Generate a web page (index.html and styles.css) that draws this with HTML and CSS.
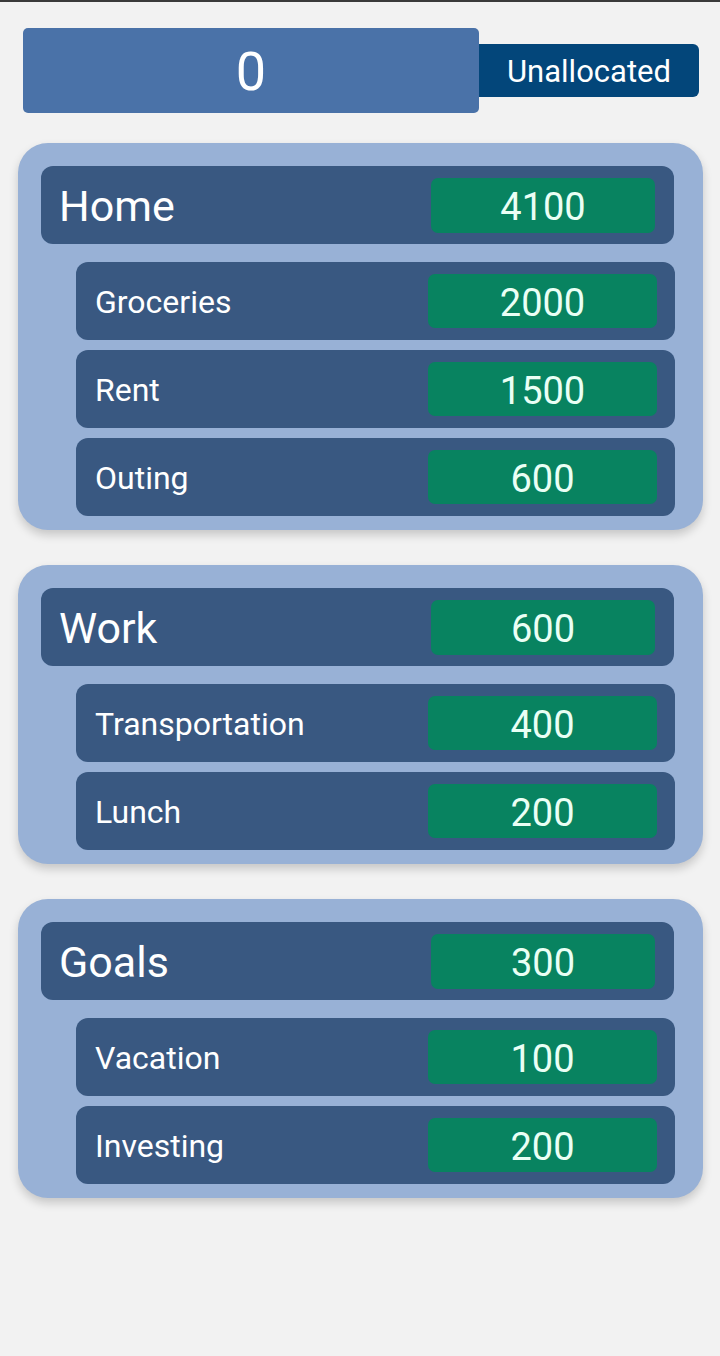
FILE: index.html
```html
<!DOCTYPE html>
<html lang="en">
<head>
<meta charset="utf-8">
<title>Budget</title>
<link rel="stylesheet" href="styles.css">
</head>
<body>
<div class="topline"></div>
<main class="page">
  <div class="summary">
    <div class="summary-amount">0</div>
    <div class="summary-label">Unallocated</div>
  </div>

  <section class="card">
    <div class="row row-head">
      <span class="name">Home</span>
      <span class="amount">4100</span>
    </div>
    <div class="subs">
      <div class="row row-sub"><span class="name">Groceries</span><span class="amount">2000</span></div>
      <div class="row row-sub"><span class="name">Rent</span><span class="amount">1500</span></div>
      <div class="row row-sub"><span class="name">Outing</span><span class="amount">600</span></div>
    </div>
  </section>

  <section class="card">
    <div class="row row-head">
      <span class="name">Work</span>
      <span class="amount">600</span>
    </div>
    <div class="subs">
      <div class="row row-sub"><span class="name">Transportation</span><span class="amount">400</span></div>
      <div class="row row-sub"><span class="name">Lunch</span><span class="amount">200</span></div>
    </div>
  </section>

  <section class="card">
    <div class="row row-head">
      <span class="name">Goals</span>
      <span class="amount">300</span>
    </div>
    <div class="subs">
      <div class="row row-sub"><span class="name">Vacation</span><span class="amount">100</span></div>
      <div class="row row-sub"><span class="name">Investing</span><span class="amount">200</span></div>
    </div>
  </section>
</main>
</body>
</html>
```

FILE: styles.css
```css
* {
  box-sizing: border-box;
}

html, body {
  margin: 0;
  padding: 0;
}

body {
  background: #f2f2f2;
  font-family: Roboto, "Noto Sans", "Liberation Sans", sans-serif;
  color: #ffffff;
  min-height: 1356px;
}

.topline {
  height: 2px;
  background: #3a3a3a;
}

.page {
  padding: 26px 0 0 18px;
}

.summary {
  display: flex;
  align-items: center;
  margin-left: 5px;
}

.summary-amount {
  width: 456px;
  height: 85px;
  background: #4a72a8;
  border-radius: 5px;
  display: flex;
  align-items: center;
  justify-content: center;
  font-size: 54px;
  line-height: 1;
  padding-top: 2px;
}

.summary-label {
  width: 220px;
  height: 53px;
  background: #03467a;
  border-radius: 0 6px 6px 0;
  display: flex;
  align-items: center;
  justify-content: center;
  font-size: 31px;
  line-height: 1;
  padding-top: 2px;
}

.card {
  width: 685px;
  margin-top: 30px;
  margin-bottom: 35px;
  background: #98b1d6;
  border-radius: 30px;
  padding: 23px 28px 14px 23px;
  box-shadow: 0 5px 10px rgba(0, 0, 0, 0.18);
}

.card + .card {
  margin-top: 0;
}

.row {
  display: flex;
  align-items: center;
  justify-content: space-between;
  height: 78px;
  background: #395881;
  border-radius: 12px;
}

.row-head {
  padding: 0 19px 0 18px;
  width: 633px;
}

.row-head .name {
  font-size: 43px;
  padding-top: 2px;
}

.row-sub .name {
  font-size: 32px;
  padding-top: 2px;
}

.subs {
  display: flex;
  flex-direction: column;
  gap: 10px;
  margin-top: 18px;
  margin-left: 35px;
}

.row-sub {
  padding: 0 18px 0 19px;
}

.amount {
  display: flex;
  align-items: center;
  justify-content: center;
  background: #088360;
  color: #eafff5;
  border-radius: 7px;
  font-size: 38px;
  line-height: 1;
  padding-top: 4px;
}

.row-head .amount {
  width: 224px;
  height: 55px;
}

.row-sub .amount {
  width: 229px;
  height: 54px;
}
```
